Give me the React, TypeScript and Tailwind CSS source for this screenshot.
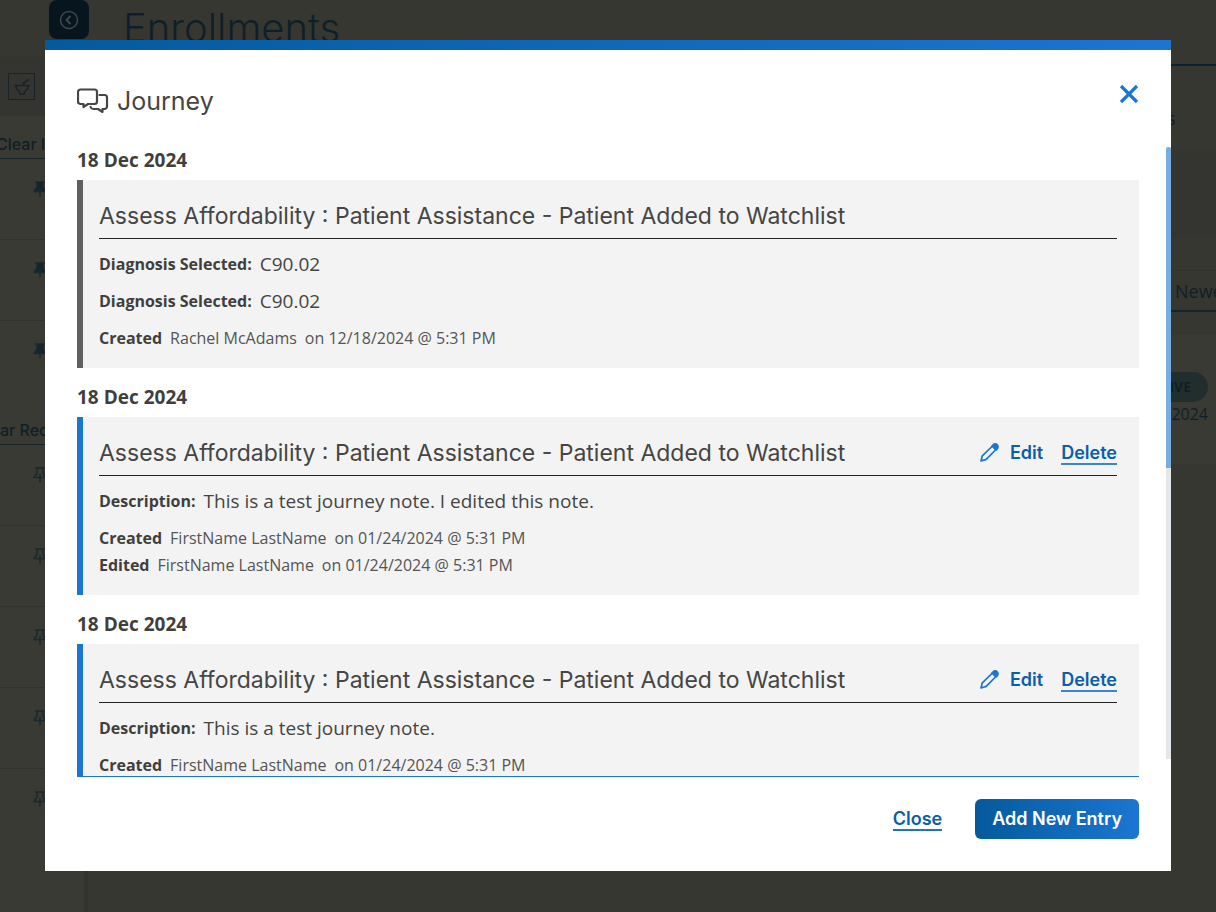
import { useState } from "react";

type Field = { label: string; value: string };
type Stamp = { label: string; name: string; time: string };
type Entry = {
  date: string;
  title: string;
  editable: boolean;
  fields: Field[];
  stamps: Stamp[];
};

const TITLE =
  "Assess Affordability : Patient Assistance - Patient Added to Watchlist";

const entries: Entry[] = [
  {
    date: "18 Dec 2024",
    title: TITLE,
    editable: false,
    fields: [
      { label: "Diagnosis Selected:", value: "C90.02" },
      { label: "Diagnosis Selected:", value: "C90.02" },
    ],
    stamps: [{ label: "Created", name: "Rachel McAdams", time: "12/18/2024 @ 5:31 PM" }],
  },
  {
    date: "18 Dec 2024",
    title: TITLE,
    editable: true,
    fields: [
      { label: "Description:", value: "This is a test journey note. I edited this note." },
    ],
    stamps: [
      { label: "Created", name: "FirstName LastName", time: "01/24/2024 @ 5:31 PM" },
      { label: "Edited", name: "FirstName LastName", time: "01/24/2024 @ 5:31 PM" },
    ],
  },
  {
    date: "18 Dec 2024",
    title: TITLE,
    editable: true,
    fields: [{ label: "Description:", value: "This is a test journey note." }],
    stamps: [{ label: "Created", name: "FirstName LastName", time: "01/24/2024 @ 5:31 PM" }],
  },
];

function ChatIcon() {
  return (
    <svg width="32" height="26" viewBox="0 0 32 26" fill="none" stroke="#454543" strokeWidth="2.200" strokeLinejoin="round" strokeLinecap="round" aria-hidden="true">
      <path d="M3.500 1.500h14a2.500 2.500 0 0 1 2.500 2.500v9.500a2.500 2.500 0 0 1-2.500 2.500H11l-4.500 3v-3h-3A2.500 2.500 0 0 1 1 13.500V4a2.500 2.500 0 0 1 2.500-2.500Z" />
      <path d="M22.500 7H27.500a2.500 2.500 0 0 1 2.500 2.500v9a2.500 2.500 0 0 1-2.500 2.500H25.500v3l-4.500-3h-4.500a3 3 0 0 1-3-2" />
    </svg>
  );
}

function PencilIcon() {
  return (
    <svg width="20" height="20" viewBox="0 0 20 20" fill="none" stroke="#1b76d3" strokeWidth="1.700" strokeLinejoin="round" aria-hidden="true">
      <path d="M1 18 2.300 12.800 12.500 3l3.500 3.500L6.200 16.400Z" />
      <path d="m12 3 1.200-1.200a2.800 2.800 0 0 1 4 4L16 7Z" fill="#1b76d3" />
    </svg>
  );
}

function PinIcon({ filled }: { filled: boolean }) {
  return (
    <svg width="14" height="16" viewBox="0 0 14 16" fill={filled ? "#14252c" : "none"} stroke="#1a292e" strokeWidth="1.500" strokeLinejoin="round" aria-hidden="true">
      <path d="M2 1h10M4 1v5L1 10.500h12L10 6V1" />
      <path d="M7 7v8.500" />
    </svg>
  );
}

function PinRows({ count, filled }: { count: number; filled: boolean }) {
  return (
    <ul>
      {Array.from({ length: count }, (_, i) => (
        <li
          key={i}
          className="flex h-[81px] items-start border-b border-[#32332f] pt-[22px] pl-[33px] last:border-transparent"
        >
          <PinIcon filled={filled} />
        </li>
      ))}
    </ul>
  );
}

function PageBehind() {
  return (
    <div className="flex h-full flex-col bg-[#373732] text-[#101f27]" aria-hidden="true">
      <div className="flex h-[57px] shrink-0 items-start gap-[34px] pl-[49px]">
        <div className="flex h-[39px] w-10 items-center justify-center rounded-lg bg-[#06151e]">
          <svg width="20" height="20" viewBox="0 0 20 20" fill="none" stroke="#41474a" strokeWidth="1.500">
            <circle cx="10" cy="10" r="8.500" />
            <path d="m11.500 6-4 4 4 4" strokeWidth="2" />
          </svg>
        </div>
        <div className="font-['Inter',sans-serif] text-[40px] leading-[56px] font-light">Enrollments</div>
      </div>
      <div className="flex min-h-0 flex-1 justify-between">
        <div className="flex w-[88px] shrink-0 flex-col overflow-hidden border-r-4 border-[#32332e] bg-[#393a34] font-['Inter',sans-serif] text-base font-medium">
          <div className="flex h-[59px] items-center bg-[#343530] pl-2">
            <div className="flex h-[27px] w-[27px] items-center justify-center border border-[#14252c]">
              <svg width="18" height="18" viewBox="0 0 18 18" fill="none" stroke="#14252c" strokeWidth="1.500" strokeLinejoin="round">
                <path d="M1.500 7.500h15M3 7.500c0 3.500 1.500 5 3.500 6V16h5v-2.500c2-1 3.500-2.500 3.500-6" />
                <path d="m9.500 6 6-4.500" strokeWidth="2" />
              </svg>
            </div>
          </div>
          <div className="-ml-1 flex h-[43px] shrink-0 items-end border-b border-[#1a2427] pb-[2px] whitespace-nowrap">
            Clear I
          </div>
          <PinRows count={3} filled />
          <div className="flex h-[43px] shrink-0 items-end border-b border-[#1a2427] pb-[2px] whitespace-nowrap">
            ar Rec
          </div>
          <PinRows count={5} filled={false} />
        </div>
        <div className="flex w-[45px] shrink-0 flex-col overflow-hidden font-['Open_Sans','Noto_Sans',sans-serif]">
          <div className="mt-[7px] h-[87px] border-t-2 border-[#0c2130] pt-[38px] text-lg">
            <span className="-ml-1">s</span>
          </div>
          <div className="h-[86px] bg-[#343530]" />
          <div className="mt-[33px] flex h-[42px] items-center border-t border-b-2 border-t-[#32332e] border-b-[#14252c] pl-1 text-lg">
            Newe
          </div>
          <div className="mt-[23px] h-[129px] bg-[#393a34] pt-[37px]">
            <div className="mr-2 flex h-[30px] items-center justify-end rounded-r-full bg-[#222e2e] pr-[17px] text-sm font-bold">
              IVE
            </div>
            <div className="pr-2 text-right text-base">2024</div>
          </div>
        </div>
      </div>
    </div>
  );
}

function EntryCard({ entry }: { entry: Entry }) {
  return (
    <section>
      <h3 className="mb-2 text-[19px] leading-6 font-bold text-[#3f3f3d]">{entry.date}</h3>
      <article
        className={
          entry.editable
            ? "border-l-[6px] border-[#1b76d3] bg-[#f3f3f3] pr-[22px] pb-4 pl-4"
            : "border-l-[6px] border-[#5f5f5d] bg-[#f3f3f3] pr-[22px] pb-4 pl-4"
        }
      >
        <div className="flex items-center justify-between border-b border-[#222222] pt-5 pb-[6px] font-['Inter',sans-serif]">
          <h4 className="text-[23px] leading-8 text-[#454543]">{entry.title}</h4>
          {entry.editable && (
            <div className="flex items-center gap-[18px] text-lg leading-6 font-semibold text-[#0a5fa8]">
              <button type="button" className="flex items-center gap-[10px]">
                <PencilIcon />
                Edit
              </button>
              <button type="button" className="border-b-2 border-[#3a86c8] pt-[2px] leading-5">
                Delete
              </button>
            </div>
          )}
        </div>
        <div className="flex flex-col gap-[10px] pt-3">
          {entry.fields.map((field, i) => (
            <p key={i} className="flex items-center gap-2 text-[19px] leading-[27px] text-[#454543]">
              <strong className="text-base leading-[27px] text-[#3f3f3d]">{field.label}</strong>
              {field.value}
            </p>
          ))}
          <div>
            {entry.stamps.map((stamp, i) => (
              <p key={i} className="flex gap-2 text-base leading-[27px] text-[#555553]">
                <strong className="text-[#3f3f3d]">{stamp.label}</strong>
                <span>{stamp.name}</span>
                <span>on {stamp.time}</span>
              </p>
            ))}
          </div>
        </div>
      </article>
    </section>
  );
}

export default function App() {
  const [open, setOpen] = useState(true);
  const close = () => setOpen(false);

  return (
    <div className="relative h-screen overflow-hidden">
      <PageBehind />
      {open && (
        <div className="absolute inset-0 flex px-[45px] pt-10 pb-[41px] font-['Open_Sans','Noto_Sans',sans-serif]">
          <div role="dialog" aria-labelledby="journey-title" className="flex w-full flex-col bg-white">
            <div className="h-[10px] shrink-0 bg-linear-to-r from-[#055a9c] to-[#1b76d3]" />
            <header className="flex h-[97px] shrink-0 items-start justify-between px-8">
              <h2
                id="journey-title"
                className="flex items-center gap-2 pt-[34px] font-['Inter',sans-serif] text-[25px] leading-[34px] text-[#454543]"
              >
                <ChatIcon />
                Journey
              </h2>
              <button type="button" aria-label="Close dialog" onClick={close} className="pt-[34px]">
                <svg width="20" height="20" viewBox="0 0 20 20" stroke="#1b76d3" strokeWidth="3.200" aria-hidden="true">
                  <path d="m2 2 16 16M18 2 2 18" />
                </svg>
              </button>
            </header>
            <div className="relative flex min-h-0 flex-1 flex-col px-8">
              <div className="flex min-h-0 flex-1 flex-col gap-[17px] overflow-y-auto border-b border-[#1b76d3] pt-px [scrollbar-width:none]">
                {entries.map((entry, i) => (
                  <EntryCard key={i} entry={entry} />
                ))}
              </div>
              <div className="absolute top-0 right-0 bottom-[18px] w-[5px] bg-[#e3e7ea]">
                <div className="h-[321px] rounded-t-sm bg-[#78ade0]" />
              </div>
            </div>
            <footer className="flex shrink-0 items-center justify-end gap-[33px] px-8 pt-[22px] pb-8 font-['Inter',sans-serif] text-lg leading-6 font-semibold">
              <button type="button" onClick={close} className="border-b-2 border-[#1f74bd] pt-[2px] leading-5 text-[#0a5fa8]">
                Close
              </button>
              <button
                type="button"
                className="rounded-md bg-linear-to-r from-[#055a9c] to-[#1b76d3] px-[17px] py-2 text-white"
              >
                Add New Entry
              </button>
            </footer>
          </div>
        </div>
      )}
    </div>
  );
}
